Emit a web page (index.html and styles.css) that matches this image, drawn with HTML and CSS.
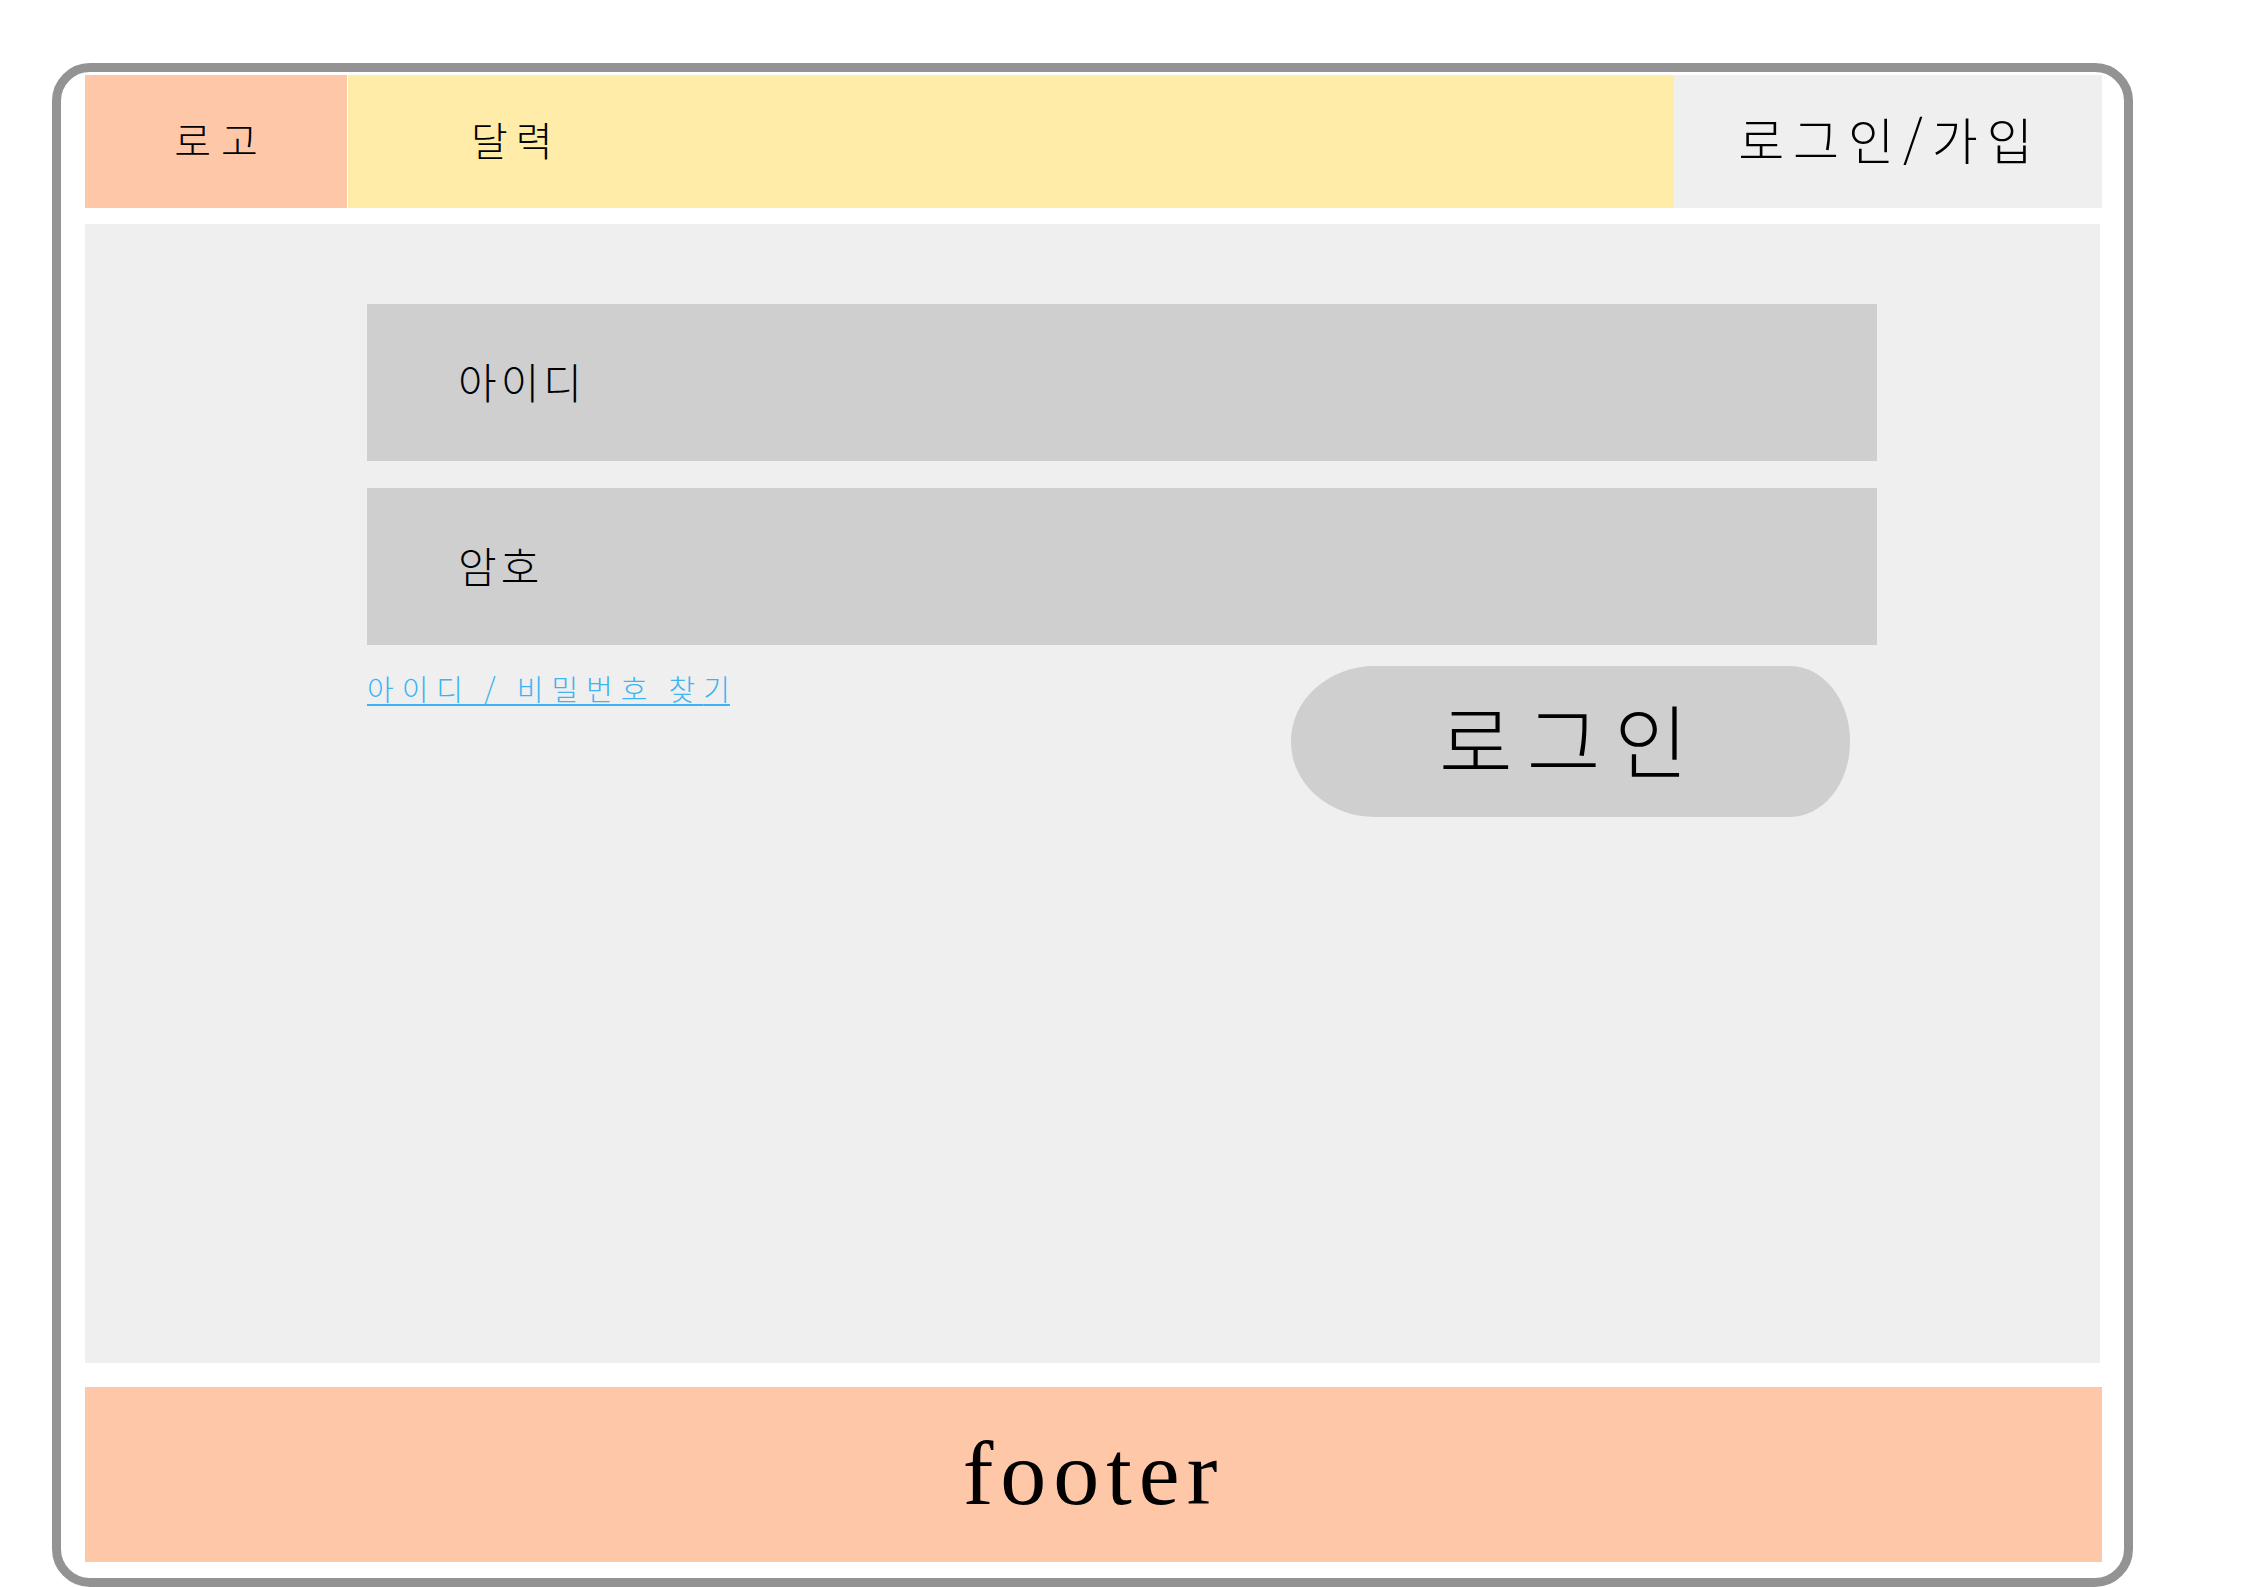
FILE: index.html
```html
<!DOCTYPE html>
<html lang="ko">
<head>
<meta charset="utf-8">
<title>로그인</title>
<link rel="stylesheet" href="styles.css">
</head>
<body>
<div class="frame">
  <header class="header">
    <div class="logo">로고</div>
    <nav class="nav"><span class="nav-item">달력</span></nav>
    <div class="auth">로그인/가입</div>
  </header>
  <main class="main">
    <div class="login-form">
      <div class="field">아이디</div>
      <div class="field">암호</div>
      <div class="form-row">
        <a class="find-link" href="#">아이디 / 비밀번호 찾<span class="last">기</span></a>
        <div class="login-btn">로그인</div>
      </div>
    </div>
  </main>
  <footer class="footer">footer</footer>
</div>
</body>
</html>
```

FILE: styles.css
```css
html, body {
  margin: 0;
  padding: 0;
  background: #ffffff;
}

body {
  font-family: "Noto Sans CJK KR", "Noto Sans", sans-serif;
  color: #000000;
  font-weight: 300;
}

.frame {
  box-sizing: border-box;
  margin: 63px 0 0 52px;
  width: 2081px;
  height: 1524px;
  border: 9px solid #939393;
  border-radius: 38px;
  padding: 3px 22px 16px 24px;
  display: flex;
  flex-direction: column;
}

.header {
  display: flex;
  height: 133px;
  flex: 0 0 auto;
  gap: 1px;
}

.logo {
  width: 262px;
  background: #fec8a8;
  display: flex;
  align-items: center;
  justify-content: center;
  font-size: 40px;
  letter-spacing: 10px;
  padding-left: 10px;
  padding-bottom: 6px;
  box-sizing: border-box;
}

.nav {
  flex: 1;
  background: #ffeca8;
  display: flex;
  align-items: center;
  padding-left: 123px;
  padding-bottom: 6px;
}

.nav-item {
  font-size: 40px;
  letter-spacing: 8px;
}

.auth {
  width: 428px;
  margin-left: -1px;
  background: #efefef;
  display: flex;
  align-items: center;
  justify-content: center;
  font-size: 50px;
  letter-spacing: 9px;
  padding-left: 4px;
  padding-bottom: 8px;
  box-sizing: border-box;
}

.main {
  margin-top: 16px;
  margin-right: 2px;
  height: 1139px;
  background: #efefef;
  padding: 80px 223px 0 282px;
  box-sizing: border-box;
}

.login-form {
  display: flex;
  flex-direction: column;
  gap: 27px;
}

.field {
  height: 157px;
  background: #cfcfcf;
  display: flex;
  align-items: center;
  padding-left: 91px;
  padding-bottom: 4px;
  box-sizing: border-box;
  font-size: 42px;
  letter-spacing: 4px;
}

.form-row {
  margin-top: -6px;
  display: flex;
  justify-content: space-between;
  align-items: flex-start;
}

.find-link {
  padding-top: 8px;
  font-size: 29px;
  line-height: 1;
  letter-spacing: 8px;
  word-spacing: -3px;
  color: #3bb4f2;
  text-decoration: underline;
  text-decoration-thickness: 2px;
  text-underline-offset: 3px;
}

.find-link .last {
  letter-spacing: 0;
}

.login-btn {
  width: 559px;
  height: 151px;
  margin-right: 27px;
  background: #cfcfcf;
  border-radius: 84px 60px 60px 84px / 75px 75px 75px 75px;
  display: flex;
  align-items: center;
  justify-content: center;
  padding-bottom: 10px;
  box-sizing: border-box;
  font-size: 80px;
  letter-spacing: 14px;
}

.footer {
  margin-top: 24px;
  height: 175px;
  background: #fec8a8;
  display: flex;
  align-items: center;
  justify-content: center;
  padding-bottom: 4px;
  box-sizing: border-box;
  font-family: "Liberation Serif", "Times New Roman", serif;
  font-size: 92px;
  letter-spacing: 7px;
}
```
